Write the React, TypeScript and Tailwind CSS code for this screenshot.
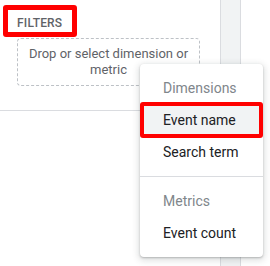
import React from 'react'

const dimensions = ['Event name', 'Search term']
const metrics = ['Event count']

const MenuItem = ({ label, active }: { label: string; active?: boolean }) => (
    <div className={`relative h-8 flex items-center pl-[23px] text-[14px] text-[#202124] ${active ? 'bg-[#f1f3f4]' : ''}`}>
        {label}
        {active && (
            <div className="absolute left-0 right-0 -top-[2px] -bottom-[2px] border-4 border-[#ff0000] rounded-[3px]" />
        )}
    </div>
)

const App = () => {
    return (
        <div className="relative w-[270px] h-[266px] bg-white flex overflow-hidden font-['Roboto',sans-serif]">
            <div className="w-[220px] shrink-0">
                <div className="h-[111px] border-b border-[#dadce0] pl-[17px] pt-[15px]">
                    <div className="relative w-max">
                        <div className="h-4 leading-4 text-[12px] font-medium tracking-[0.2px] text-[#5f6368]">FILTERS</div>
                        <div className="absolute -left-[14px] -right-[15px] -top-[10px] -bottom-[6px] border-[5px] border-[#ff0000] rounded-[3px]" />
                    </div>
                    <div className="mt-[7px] w-[183px] border border-dashed border-[#bdc1c6] rounded py-[7px] text-center text-[13px] leading-4 text-[#5f6368]">
                        Drop or select dimension or metric
                    </div>
                </div>
            </div>

            <div className="w-[21px] shrink-0 bg-[#f1f3f4] border-x border-[#dadce0]" />

            <div className="absolute left-[140px] top-[64px] w-[123px] bg-white rounded py-2 shadow-[0_1px_2px_rgba(60,64,67,0.3),0_2px_6px_2px_rgba(60,64,67,0.15)]">
                <div className="h-8 flex items-center pl-[23px] text-[14px] text-[#80868b]">Dimensions</div>
                {dimensions.map((d, i) => (
                    <MenuItem key={d} label={d} active={i === 0} />
                ))}
                <div className="my-2 border-t border-[#dadce0]" />
                <div className="h-8 flex items-center pl-[23px] text-[14px] text-[#80868b]">Metrics</div>
                {metrics.map((m) => (
                    <MenuItem key={m} label={m} />
                ))}
            </div>
        </div>
    )
}

export default App
